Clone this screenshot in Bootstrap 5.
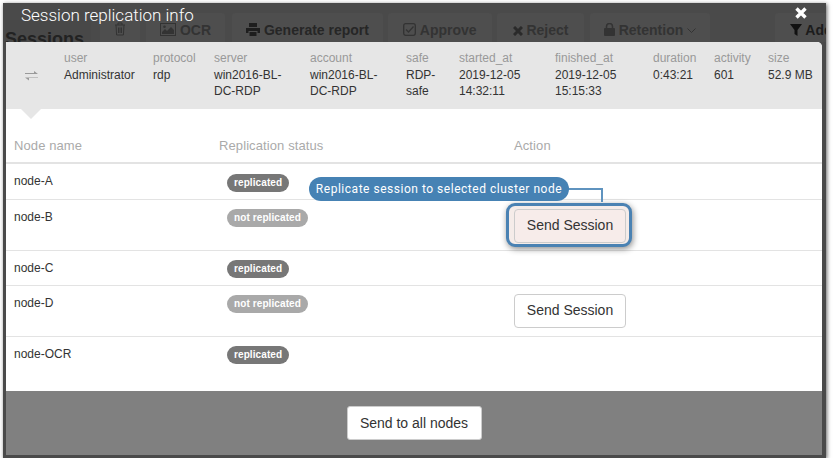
<!DOCTYPE html>
<html lang="en">
<head>
    <meta charset="UTF-8">
    <meta name="viewport" content="width=device-width, initial-scale=1.0">
    <title>Session replication info</title>
    <link href="https://cdn.jsdelivr.net/npm/bootstrap@5.3.2/dist/css/bootstrap.min.css" rel="stylesheet">
    <style>
        body {
            background: #fff;
            font-family: "Liberation Sans", Arial, sans-serif;
            font-size: 12px;
            color: #333;
            overflow: hidden;
        }
        .shot-frame {
            width: 823px;
            height: 455px;
            margin: 3px 0 0 3px;
            background: #4a4a4a;
            box-shadow: 1px 1px 4px rgba(0, 0, 0, .6);
            overflow: hidden;
        }
        .behind-bar {
            height: 39px;
            padding-left: 2px;
            overflow: hidden;
        }
        .behind-title {
            width: 86px;
            flex: none;
            font-size: 18px;
            font-weight: 700;
            color: #222;
            background: #484848;
            margin-top: 17px;
            padding-top: 6px;
        }
        .behind-btn {
            height: 40px;
            margin-top: 10px;
            flex: none;
            background: #4e4e4e;
            border-radius: 3px;
            font-size: 14px;
            font-weight: 700;
            color: #262626;
            padding-top: 7px;
            text-align: center;
        }
        .behind-btn svg { vertical-align: -1px; }
        .behind-btn svg.caret-down { vertical-align: 2px; }
        .is-dim { color: #333; }
        .w-trash { width: 40px; margin-left: 9px; }
        .w-ocr { width: 79px; margin-left: 6px; }
        .w-report { width: 151px; margin-left: 7px; }
        .w-approve { width: 104px; margin-left: 5px; }
        .w-reject { width: 87px; margin-left: 5px; }
        .w-retain { width: 120px; margin-left: 6px; }
        .w-add { width: 70px; margin-left: 65px; text-align: left; padding-left: 15px; white-space: nowrap; color: #1c1c1c; }
        .modal-title-text {
            left: 18px;
            top: 0;
            font-family: Roboto, "Liberation Sans", sans-serif;
            font-weight: 300;
            font-size: 17px;
            color: #fff;
        }
        .close-x {
            right: 19px;
            top: 4px;
        }
        .modal-box {
            width: 816px;
            height: 413px;
            background: #fff;
            border-radius: 0 5px 0 0;
            margin-left: 3px;
        }
        .info-wrap {
            height: 67px;
            background: #e6e6e6;
            border-radius: 0 5px 0 0;
        }
        .info-wrap::after {
            content: "";
            position: absolute;
            left: 15px;
            top: 67px;
            border-left: 10px solid transparent;
            border-right: 10px solid transparent;
            border-top: 10px solid #e6e6e6;
        }
        .info-grid {
            display: grid;
            grid-template-columns: 58px 89px 61px 96px 96px 53px 96px 98px 61px 54px 54px;
            padding-top: 8px;
            line-height: 16.7px;
            color: #333;
        }
        .info-swap { padding: 17px 0 0 19px; }
        .info-label { color: #999; display: block; }
        .nodes-table { margin: 0; color: #333; font-size: 12px; table-layout: fixed; }
        .nodes-table th {
            font-size: 13px;
            font-weight: 400;
            letter-spacing: .1px;
            color: #aaa;
            height: 54px;
            padding: 27px 0 0 8px;
            vertical-align: top;
            border-bottom: 2px solid #e3e3e3;
        }
        .nodes-table td {
            padding: 8px 0 0 8px;
            vertical-align: top;
            border-bottom: 1px solid #e3e3e3;
        }
        .nodes-table tr:last-child td { border-bottom: 0; }
        .row-first td { height: 36px; }
        .row-short td { height: 35px; }
        .row-tall td { height: 51px; }
        .row-last td { height: 55px; }
        .state-pill {
            display: inline-block;
            height: 18px;
            line-height: 18px;
            margin: 1px 0 0 8px;
            padding: 0 7px;
            border-radius: 9px;
            font-size: 10px;
            font-weight: 700;
            letter-spacing: .1px;
            color: #fff;
        }
        .row-first .state-pill { margin-top: 2px; }
        .state-ok { background: #777; }
        .state-no { background: #a9a9a9; }
        .send-btn {
            width: 112px;
            height: 34px;
            padding: 0;
            font-family: "Liberation Sans", Arial, sans-serif;
            font-size: 14px;
            color: #333;
            background: #fff;
            border: 1px solid #ccc;
            border-radius: 4px;
        }
        .send-wrap {
            display: inline-block;
            position: relative;
            z-index: 0;
            margin-top: 1px;
        }
        .send-wrap::before {
            content: "";
            position: absolute;
            z-index: -1;
            inset: -6px -6px -4px -8px;
            background: #f5ece9;
            border: 3px solid #4a82b3;
            border-radius: 9px;
            box-shadow: 1px 2px 6px rgba(0, 0, 0, .45);
        }
        .send-wrap .send-btn { background: #f7ecea; }
        .hint-pill {
            left: 303px;
            top: 135px;
            height: 24px;
            width: 260px;
            line-height: 24px;
            text-align: center;
            background: #4682b4;
            border-radius: 12px;
            color: #fff;
            font-family: Roboto, "Liberation Sans", sans-serif;
            font-size: 12px;
            letter-spacing: .52px;
            white-space: nowrap;
        }
        .hint-line {
            left: 562px;
            top: 146px;
            width: 35px;
            height: 14px;
            border-top: 2px solid #5f93bf;
            border-right: 2px solid #5f93bf;
        }
        .foot-bar {
            height: 64px;
            background: #808080;
        }
        .all-btn {
            width: 135px;
            height: 34px;
            padding: 0;
            font-size: 14px;
            color: #333;
            background: #fff;
            border: 1px solid #ccc;
            border-radius: 3px;
        }
    </style>
</head>
<body>
    <div class="shot-frame position-relative">
        <!-- page behind the dialog -->
        <div class="behind-bar d-flex">
            <div class="behind-title">Sessions</div>
            <div class="behind-btn w-trash">
                <svg width="12" height="14" viewBox="0 0 12 14" fill="none" stroke="#333"><path d="M1 3h10M4 3V1h4v2M2 3l.6 10h6.8L10 3M4.500 5.500v5.500M6 5.500v5.500M7.500 5.500v5.500"/></svg>
            </div>
            <div class="behind-btn w-ocr is-dim">
                <svg width="16" height="13" viewBox="0 0 16 13"><rect x=".5" y=".5" width="15" height="12" fill="none" stroke="#333"/><path d="M2 11V9l3-3 2 2 4-4 3 3v4z" fill="#333"/><circle cx="4.500" cy="3.800" r="1.300" fill="#333"/></svg>
                OCR
            </div>
            <div class="behind-btn w-report">
                <svg width="14" height="13" viewBox="0 0 14 13" fill="#1e1e1e"><path d="M3 0h8v4H3zM0 5h14v5h-2.500V8h-9v2H0zM3.500 9h7v4h-7z"/></svg>
                Generate report
            </div>
            <div class="behind-btn w-approve is-dim">
                <svg width="13" height="13" viewBox="0 0 13 13" fill="none" stroke="#333" stroke-width="1.300"><rect x=".7" y=".7" width="11.600" height="11.600" rx="2"/><path d="M3 6.500l2.500 2.500 5-5.500"/></svg>
                Approve
            </div>
            <div class="behind-btn w-reject is-dim">
                <svg width="10" height="10" viewBox="0 0 10 10" stroke="#2a2a2a" stroke-width="3"><path d="M1 1l8 8M9 1l-8 8"/></svg>
                Reject
            </div>
            <div class="behind-btn w-retain is-dim">
                <svg width="11" height="13" viewBox="0 0 11 13"><rect y="5" width="11" height="8" rx="1" fill="#333"/><path d="M2.500 5V3.500a3 3 0 0 1 6 0V5" fill="none" stroke="#333" stroke-width="1.500"/></svg>
                Retention
                <svg class="caret-down" width="9" height="5" viewBox="0 0 9 5" fill="none" stroke="#333"><path d="M.5.5l4 4 4-4"/></svg>
            </div>
            <div class="behind-btn w-add">
                <svg width="12" height="12" viewBox="0 0 12 12" fill="#111"><path d="M0 0h12L7.500 6v6l-3-2V6z"/></svg>
                Add
            </div>
        </div>

        <div class="modal-title-text position-absolute">Session replication info</div>
        <svg class="close-x position-absolute" width="12" height="12" viewBox="0 0 12 12" stroke="#fff" stroke-width="3.400"><path d="M1.500 1.500l9 9M10.500 1.500l-9 9"/></svg>

        <!-- dialog -->
        <div class="modal-box position-relative">
            <div class="info-wrap position-relative">
                <div class="info-grid">
                    <div class="info-swap">
                        <svg width="13" height="10" viewBox="0 0 13 10" fill="#999"><path d="M0 2h9V0l4 3H0zM13 7H4v2.500L0 6.500h13z"/></svg>
                    </div>
                    <div><span class="info-label">user</span>Administrator</div>
                    <div><span class="info-label">protocol</span>rdp</div>
                    <div><span class="info-label">server</span>win2016-BL-<br>DC-RDP</div>
                    <div><span class="info-label">account</span>win2016-BL-<br>DC-RDP</div>
                    <div><span class="info-label">safe</span>RDP-<br>safe</div>
                    <div><span class="info-label">started_at</span>2019-12-05<br>14:32:11</div>
                    <div><span class="info-label">finished_at</span>2019-12-05<br>15:15:33</div>
                    <div><span class="info-label">duration</span>0:43:21</div>
                    <div><span class="info-label">activity</span>601</div>
                    <div><span class="info-label">size</span>52.9 MB</div>
                </div>
            </div>

            <table class="table nodes-table">
                <colgroup>
                    <col style="width: 205px">
                    <col style="width: 295px">
                    <col>
                </colgroup>
                <thead>
                    <tr>
                        <th>Node name</th>
                        <th>Replication status</th>
                        <th>Action</th>
                    </tr>
                </thead>
                <tbody>
                    <tr class="row-first">
                        <td>node-A</td>
                        <td><span class="state-pill state-ok">replicated</span></td>
                        <td></td>
                    </tr>
                    <tr class="row-tall">
                        <td>node-B</td>
                        <td><span class="state-pill state-no">not replicated</span></td>
                        <td><span class="send-wrap"><button class="send-btn" type="button">Send Session</button></span></td>
                    </tr>
                    <tr class="row-short">
                        <td>node-C</td>
                        <td><span class="state-pill state-ok">replicated</span></td>
                        <td></td>
                    </tr>
                    <tr class="row-tall">
                        <td>node-D</td>
                        <td><span class="state-pill state-no">not replicated</span></td>
                        <td><button class="send-btn" type="button">Send Session</button></td>
                    </tr>
                    <tr class="row-last">
                        <td>node-OCR</td>
                        <td><span class="state-pill state-ok">replicated</span></td>
                        <td></td>
                    </tr>
                </tbody>
            </table>

            <div class="hint-line position-absolute"></div>
            <div class="hint-pill position-absolute">Replicate session to selected cluster node</div>

            <div class="foot-bar d-flex justify-content-center align-items-center">
                <button class="all-btn" type="button">Send to all nodes</button>
            </div>
        </div>
    </div>
<script src="https://cdn.jsdelivr.net/npm/bootstrap@5.3.2/dist/js/bootstrap.bundle.min.js"></script>
</body>
</html>
